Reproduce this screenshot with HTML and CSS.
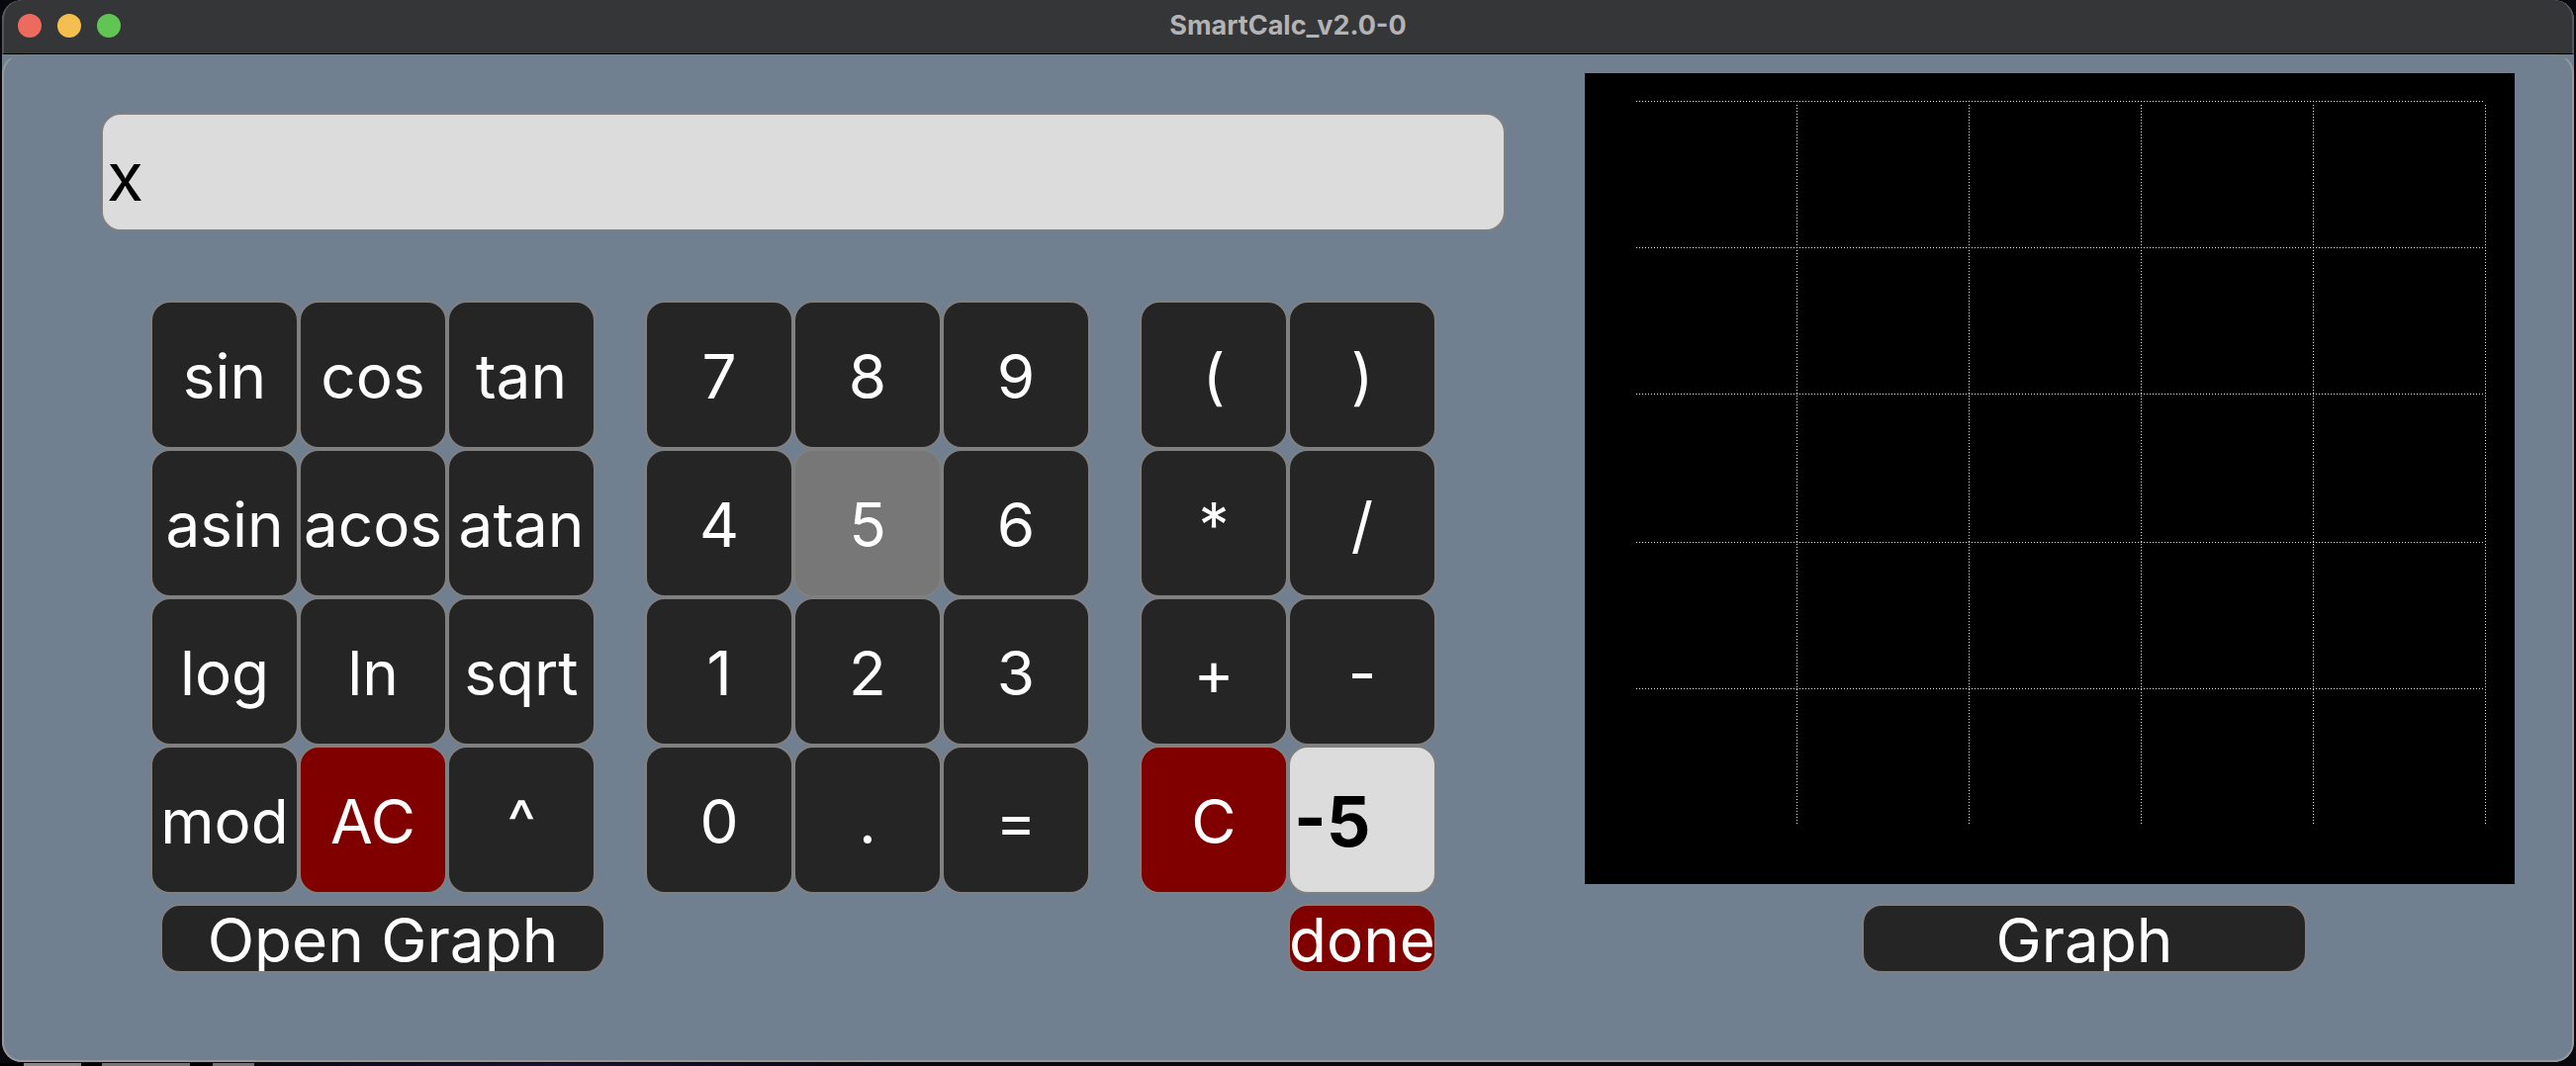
FILE: index.html
```
<!DOCTYPE html>
<html lang="en">
<head>
<meta charset="utf-8">
<meta name="viewport" content="width=device-width, initial-scale=1">
<title>SmartCalc_v2.0-0</title>
<link rel="stylesheet" href="styles.css">
</head>
<body>
<div class="window">
  <header class="titlebar">
    <div class="lights">
      <button class="light light-close" type="button" aria-label="Close"></button>
      <button class="light light-minimize" type="button" aria-label="Minimize"></button>
      <button class="light light-zoom" type="button" aria-label="Zoom"></button>
    </div>
    <h1 class="title">SmartCalc_v2.0-0</h1>
  </header>
  <main class="content">
    <section class="calculator">
      <input class="display" type="text" value="x" aria-label="Expression">
      <div class="pads">
        <div class="pad pad-functions">
          <button class="key" type="button">sin</button>
          <button class="key" type="button">cos</button>
          <button class="key" type="button">tan</button>
          <button class="key" type="button">asin</button>
          <button class="key" type="button">acos</button>
          <button class="key" type="button">atan</button>
          <button class="key" type="button">log</button>
          <button class="key" type="button">ln</button>
          <button class="key" type="button">sqrt</button>
          <button class="key" type="button">mod</button>
          <button class="key key-red" type="button">AC</button>
          <button class="key" type="button">^</button>
        </div>
        <div class="pad pad-digits">
          <button class="key" type="button">7</button>
          <button class="key" type="button">8</button>
          <button class="key" type="button">9</button>
          <button class="key" type="button">4</button>
          <button class="key key-pressed" type="button">5</button>
          <button class="key" type="button">6</button>
          <button class="key" type="button">1</button>
          <button class="key" type="button">2</button>
          <button class="key" type="button">3</button>
          <button class="key" type="button">0</button>
          <button class="key" type="button">.</button>
          <button class="key" type="button">=</button>
        </div>
        <div class="pad pad-operators">
          <button class="key" type="button">(</button>
          <button class="key" type="button">)</button>
          <button class="key" type="button">*</button>
          <button class="key" type="button">/</button>
          <button class="key" type="button">+</button>
          <button class="key" type="button">-</button>
          <button class="key key-red" type="button">C</button>
          <input class="x-value" type="text" value="-5" aria-label="Value of x">
        </div>
      </div>
      <div class="actions">
        <button class="key action action-wide" type="button">Open Graph</button>
        <button class="key action key-red" type="button">done</button>
      </div>
    </section>
    <section class="plot">
      <svg class="graph" viewBox="0 0 940 820" role="img" aria-label="Empty graph">
        <rect width="940" height="820" fill="#000"/>
        <g class="grid-lines">
          <path d="M52 28.5H908M52 176.5H908M52 324.5H908M52 474.5H908M52 622.5H908"/>
          <path d="M214.5 32V760M388.5 32V760M562.5 32V760M736.5 32V760M910.5 32V760"/>
        </g>
      </svg>
      <div class="plot-actions">
        <button class="key action action-wide" type="button">Graph</button>
      </div>
    </section>
  </main>
</div>
</body>
</html>
```
FILE: styles.css
```
* {
  box-sizing: border-box;
}

/* The desktop shows as a thin strip below the window. */
body {
  margin: 0;
  min-height: 100vh;
  padding: 0 2px 4px;
  display: flex;
  background-color: #08080e;
  background-image: linear-gradient(
    to right,
    #000 24px, #8a8688 24px, #8a8688 82px,
    #000 82px, #000 103px, #777374 103px, #777374 192px,
    #000 192px, #000 215px, #777374 215px, #777374 257px,
    #0a0a12 257px, #1a1238 560px, #08080e 900px
  );
  background-position: left bottom;
  background-size: 100% 3px;
  background-repeat: no-repeat;
  font-family: Inter, "Liberation Sans", sans-serif;
}

.window {
  flex: 1;
  display: flex;
  flex-direction: column;
  border-radius: 20px;
  overflow: hidden;
  background: #708090;
}

.titlebar {
  height: 55px;
  display: grid;
  grid-template-columns: 1fr auto 1fr;
  align-items: center;
  padding: 0 14px 3px;
  background: #353638;
  border: 1px solid #55565a;
  border-width: 0 2px 1px;
  border-bottom-color: #000;
  border-radius: 20px 20px 0 0;
}

.lights {
  display: flex;
  gap: 16px;
}

.light {
  width: 24px;
  height: 24px;
  padding: 0;
  border: 0;
  border-radius: 50%;
}

.light-close { background: #ed6a5e; }
.light-minimize { background: #f5bf4f; }
.light-zoom { background: #61c554; }

.title {
  margin: 0;
  font-size: 27px;
  line-height: 32px;
  font-weight: 700;
  color: #b3b3b5;
}

.content {
  flex: 1;
  display: grid;
  grid-template-columns: 1420fr 940fr;
  gap: 80px;
  align-items: start;
  padding: 18px 58px 40px 98px;
  border: 2px solid #999;
  border-top: 1px solid #808080;
  border-radius: 20px;
}

.calculator {
  padding-top: 40px;
}

.display,
.x-value {
  display: block;
  width: 100%;
  min-width: 0;
  border: 2px solid #808080;
  border-radius: 20px;
  background: #dcdcdc;
  color: #000;
  font-family: inherit;
}

.display {
  height: 120px;
  padding: 8px 4px 0;
  font-size: 68px;
}

.x-value {
  height: 150px;
  padding: 2px 4px 0;
  font-size: 70px;
  font-weight: 700;
}

.pads {
  display: grid;
  grid-template-columns: 3fr 3fr 2fr;
  gap: 50px;
  padding: 70px 70px 0 50px;
}

.pad {
  display: grid;
  grid-template-columns: repeat(3, minmax(0, 1fr));
}

.pad-operators {
  grid-template-columns: repeat(2, minmax(0, 1fr));
}

.key {
  display: flex;
  align-items: center;
  justify-content: center;
  min-width: 0;
  height: 150px;
  padding: 4px 0 0;
  overflow: hidden;
  border: 2px solid #808080;
  border-radius: 20px;
  background: #252525;
  color: #fff;
  font-family: inherit;
  font-size: 62px;
  line-height: 80px;
}

.key-red { background: #800000; }
.key-pressed { background: #777; }

.actions {
  display: flex;
  justify-content: space-between;
  padding: 10px 70px 0 60px;
}

.action {
  width: 150px;
  height: 70px;
}

.action-wide {
  width: 450px;
}

.graph {
  display: block;
  width: 100%;
}

.grid-lines {
  fill: none;
  stroke: #e0e0e0;
  stroke-width: 1px;
  stroke-dasharray: 1 2;
  shape-rendering: crispEdges;
}

.plot-actions {
  display: flex;
  justify-content: center;
  padding: 20px 0 0 70px;
}
```
